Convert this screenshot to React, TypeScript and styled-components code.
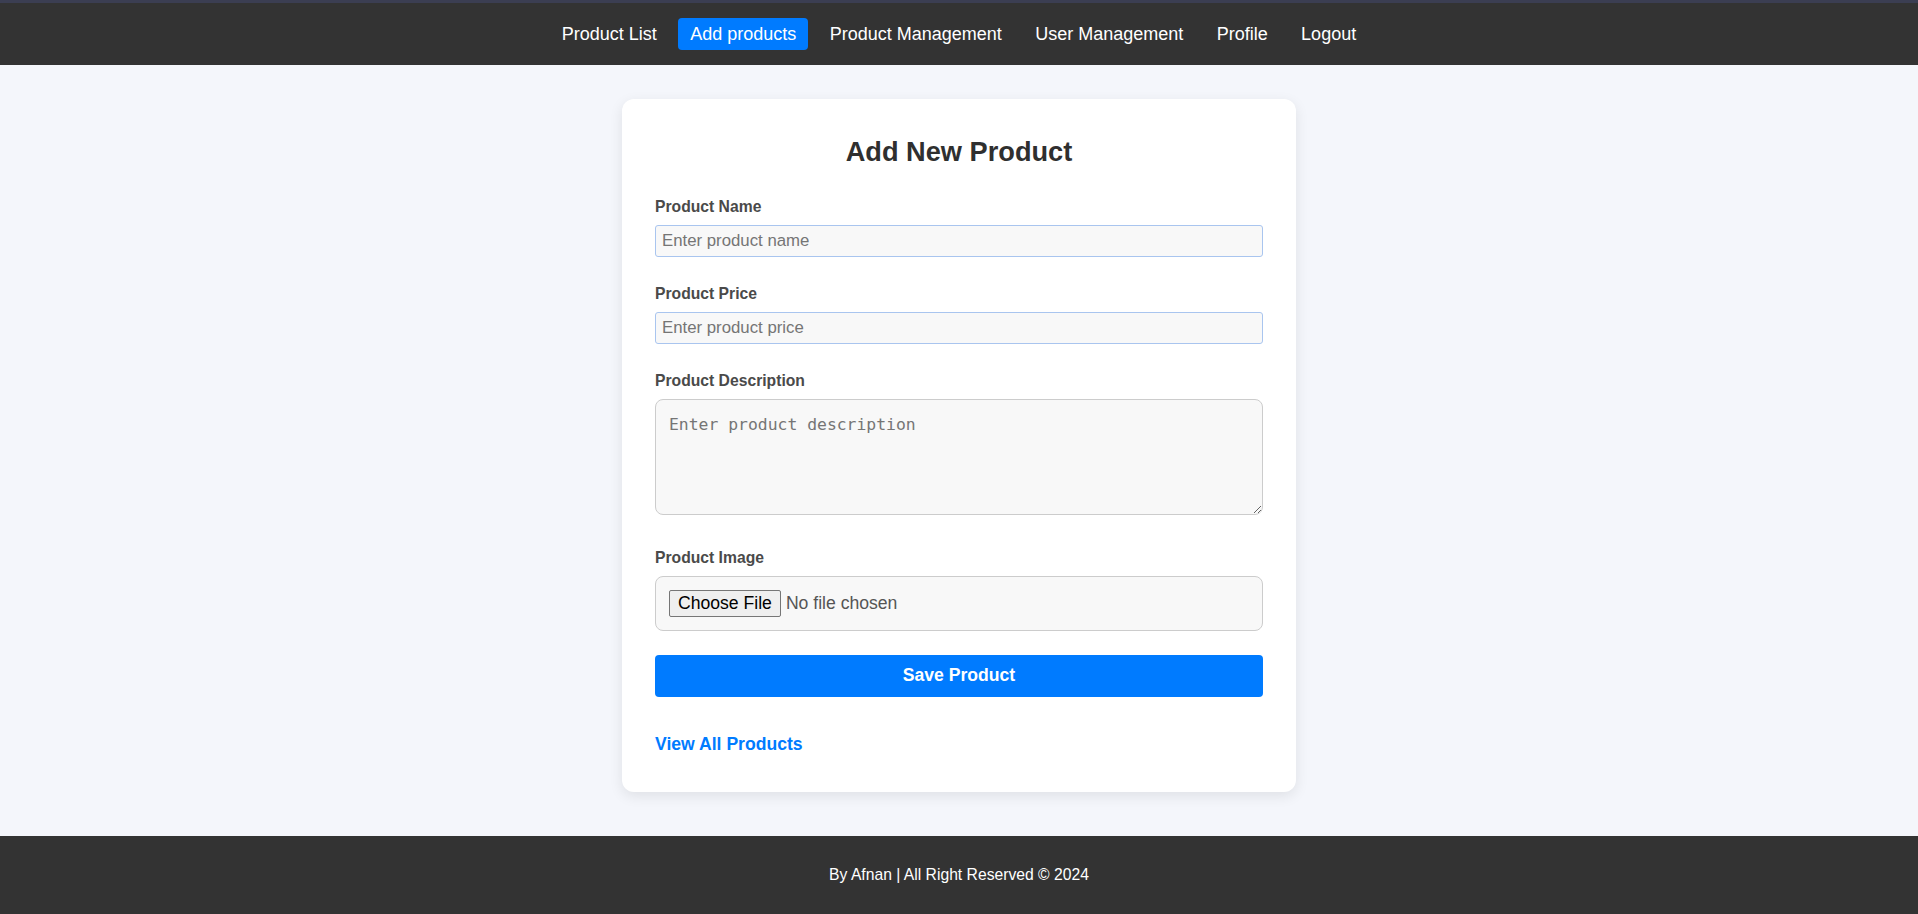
import React from "react";
import styled, { createGlobalStyle } from "styled-components";

const GlobalStyle = createGlobalStyle`
  html, body {
    margin: 0;
    padding: 0;
    background: #f4f6fb;
    font-family: "Liberation Sans", Arial, sans-serif;
  }
  * { box-sizing: border-box; }
`;

const Page = styled.div`
  min-height: 100vh;
  display: flex;
  flex-direction: column;
`;

const NavBar = styled.nav`
  background: #333333;
  border-top: 3px solid #3b3e52;
  height: 65px;
  display: flex;
  justify-content: center;
  align-items: center;
  gap: 9.4px;
`;

const NavLink = styled.a<{ $active?: boolean }>`
  color: #ffffff;
  text-decoration: none;
  font-size: 18px;
  line-height: 20px;
  padding: 6px 12px;
  border-radius: 4px;
  background: ${(p) => (p.$active ? "#007bff" : "transparent")};
  cursor: pointer;
`;

const Main = styled.main`
  flex: 1;
  display: flex;
  justify-content: center;
  align-items: flex-start;
  padding: 34px 0 42px;
`;

const Card = styled.div`
  width: 674px;
  background: #ffffff;
  border-radius: 12px;
  padding: 33px;
  box-shadow: 0 4px 14px rgba(0, 0, 0, 0.09);
`;

const Title = styled.h2`
  margin: 4px 0 31px;
  text-align: center;
  font-size: 27.2px;
  line-height: 31px;
  font-weight: 700;
  color: #2f2f2f;
`;

const Group = styled.div<{ $gap?: number }>`
  margin-bottom: ${(p) => (p.$gap ?? 28.4)}px;
`;

const Label = styled.label`
  display: block;
  font-size: 15.7px;
  line-height: 18px;
  font-weight: 700;
  color: #4a4a4a;
  margin-bottom: 8.8px;
`;

const TextInput = styled.input`
  display: block;
  width: 100%;
  height: 32px;
  padding: 0 6px;
  font-family: "Liberation Sans", Arial, sans-serif;
  font-size: 16.8px;
  color: #333;
  background: #f8f8f8;
  border: 1px solid #a9c5ef;
  border-radius: 3px;
  outline: none;
  &::placeholder { color: #757575; }
`;

const TextArea = styled.textarea`
  display: block;
  width: 100%;
  height: 116px;
  padding: 15px 13px 13px;
  font-family: "DejaVu Sans Mono", monospace;
  font-size: 16.4px;
  line-height: 19px;
  color: #333;
  background: #f8f8f8;
  border: 1px solid #cccccc;
  border-radius: 8px;
  outline: none;
  &::placeholder { color: #757575; }
`;

const FileBox = styled.label`
  display: flex;
  align-items: center;
  width: 100%;
  height: 55px;
  padding: 0 13px;
  background: #f8f8f8;
  border: 1px solid #cccccc;
  border-radius: 8px;
  font-size: 17.6px;
  cursor: pointer;
`;

const HiddenFile = styled.input`
  display: none;
`;

const ChooseButton = styled.span`
  display: inline-flex;
  align-items: center;
  height: 27px;
  padding: 0 8px;
  background: #efefef;
  border: 1px solid #767676;
  border-radius: 2px;
  color: #000000;
  font-size: 17.6px;
  margin-right: 5px;
`;

const FileName = styled.span`
  color: #555555;
  font-size: 17.6px;
`;

const SaveButton = styled.button`
  display: block;
  width: 100%;
  height: 42px;
  border: none;
  border-radius: 4px;
  background: #007bff;
  color: #ffffff;
  font-family: "Liberation Sans", Arial, sans-serif;
  font-size: 17.6px;
  font-weight: 700;
  cursor: pointer;
  margin-bottom: 37px;
`;

const ViewLink = styled.a`
  display: block;
  color: #007bff;
  text-decoration: none;
  font-size: 17.6px;
  line-height: 20px;
  font-weight: 700;
  margin-bottom: 5.5px;
`;

const Footer = styled.footer`
  background: #333333;
  color: #ffffff;
  text-align: center;
  padding: 30px 0;
  font-size: 15.7px;
  line-height: 18px;
`;

const links = [
  { label: "Product List" },
  { label: "Add products", active: true },
  { label: "Product Management" },
  { label: "User Management" },
  { label: "Profile" },
  { label: "Logout" },
];

export default function App() {
  return (
    <Page>
      <GlobalStyle />
      <NavBar>
        {links.map((l) => (
          <NavLink key={l.label} $active={l.active}>
            {l.label}
          </NavLink>
        ))}
      </NavBar>
      <Main>
        <Card>
          <Title>Add New Product</Title>
          <Group>
            <Label htmlFor="pname">Product Name</Label>
            <TextInput id="pname" type="text" placeholder="Enter product name" />
          </Group>
          <Group>
            <Label htmlFor="pprice">Product Price</Label>
            <TextInput id="pprice" type="text" placeholder="Enter product price" />
          </Group>
          <Group $gap={34}>
            <Label htmlFor="pdesc">Product Description</Label>
            <TextArea id="pdesc" placeholder="Enter product description" />
          </Group>
          <Group $gap={24}>
            <Label>Product Image</Label>
            <FileBox>
              <HiddenFile type="file" />
              <ChooseButton>Choose File</ChooseButton>
              <FileName>No file chosen</FileName>
            </FileBox>
          </Group>
          <SaveButton type="button">Save Product</SaveButton>
          <ViewLink>View All Products</ViewLink>
        </Card>
      </Main>
      <Footer>By Afnan | All Right Reserved © 2024</Footer>
    </Page>
  );
}
